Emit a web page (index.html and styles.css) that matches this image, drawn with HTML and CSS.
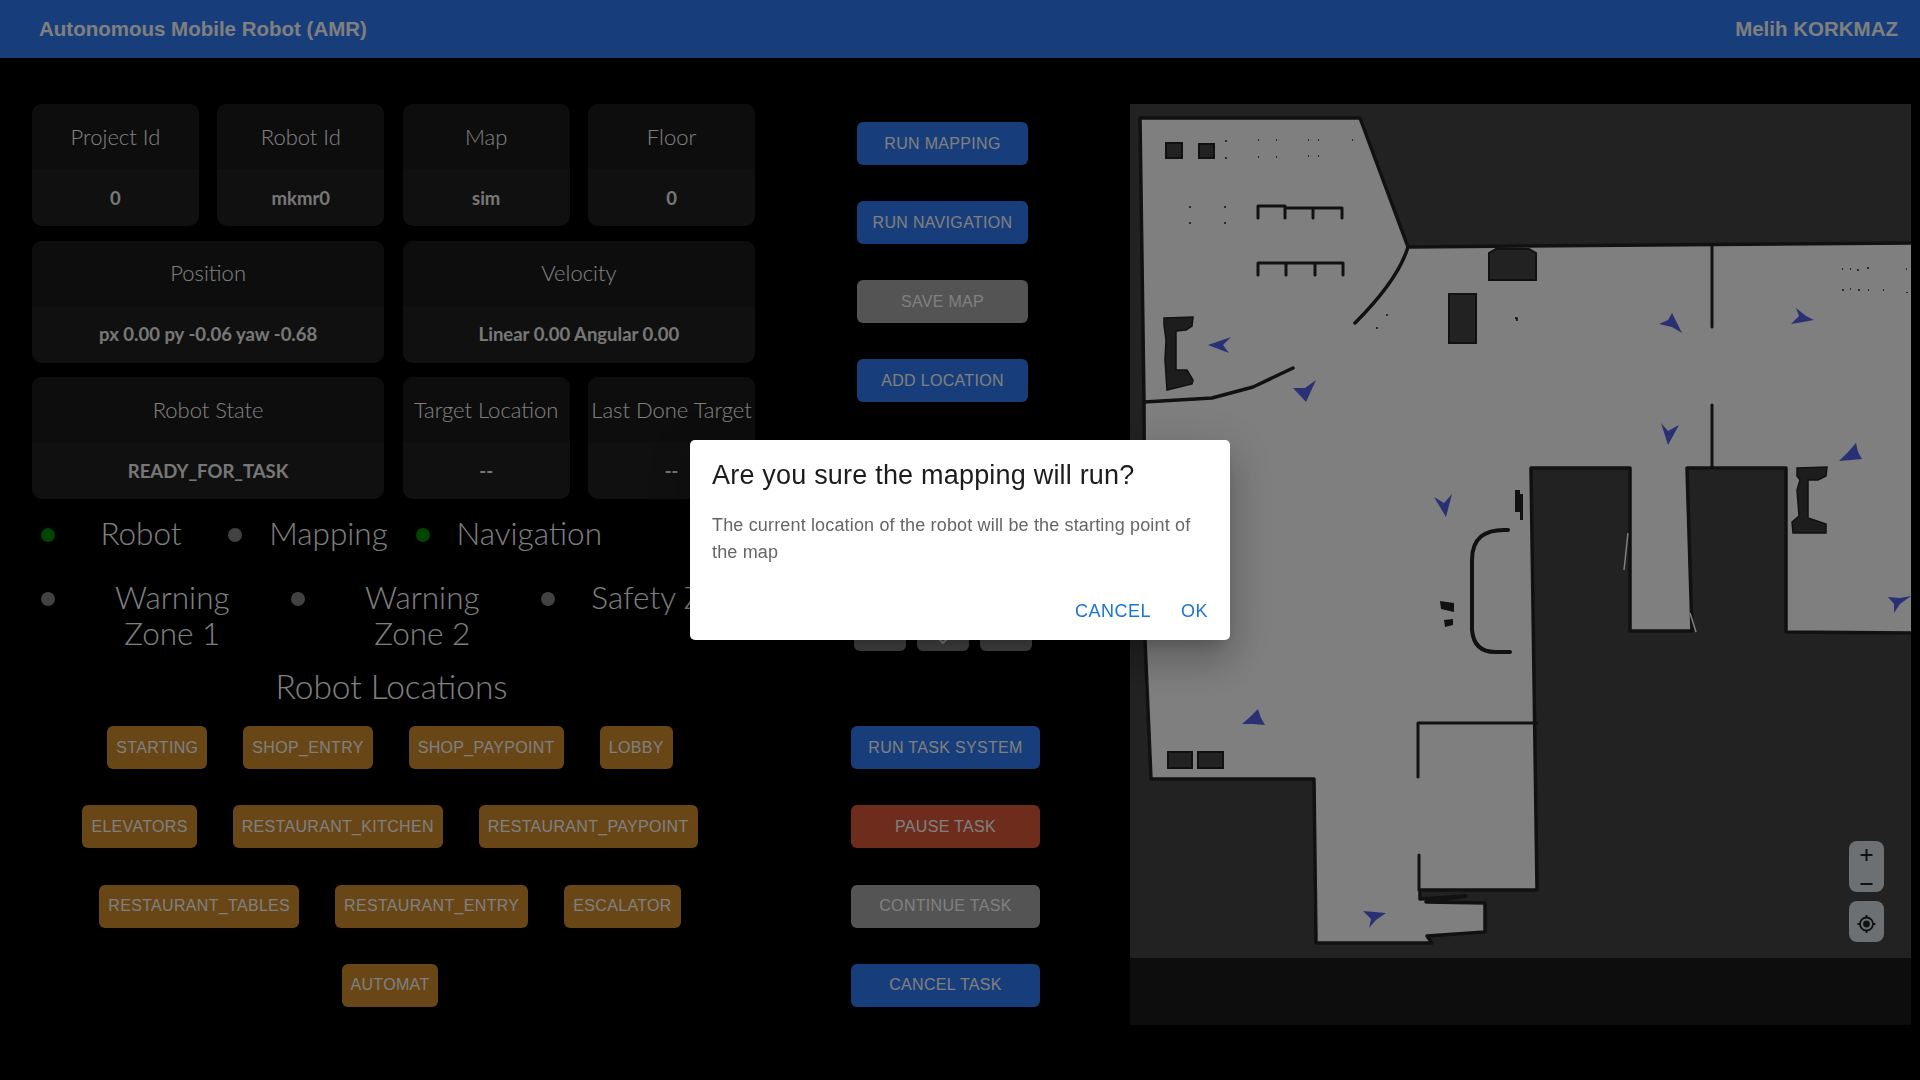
FILE: index.html
```html
<!DOCTYPE html>
<html>
    <head>
        <link rel="stylesheet" href="styles.css">
        <title>Autonomous Mobile Robot (AMR)</title>
        <meta charset="UTF-8">
        <meta name="viewport" content="width=device-width, initial-scale=1.0">
    </head>
    <body>
        <header class="top-bar">
            <span>Autonomous Mobile Robot (AMR)</span>
            <span>Melih KORKMAZ</span>
        </header>

        <div class="main-container">
            <section class="left-column">
                <div class="info-grid">
                    <div class="card"><div class="card-head">Project Id</div><div class="card-value">0</div></div>
                    <div class="card"><div class="card-head">Robot Id</div><div class="card-value">mkmr0</div></div>
                    <div class="card"><div class="card-head">Map</div><div class="card-value">sim</div></div>
                    <div class="card"><div class="card-head">Floor</div><div class="card-value">0</div></div>
                    <div class="card wide"><div class="card-head">Position</div><div class="card-value">px 0.00 py -0.06 yaw -0.68</div></div>
                    <div class="card wide"><div class="card-head">Velocity</div><div class="card-value">Linear 0.00 Angular 0.00</div></div>
                    <div class="card wide"><div class="card-head">Robot State</div><div class="card-value">READY_FOR_TASK</div></div>
                    <div class="card"><div class="card-head">Target Location</div><div class="card-value">--</div></div>
                    <div class="card"><div class="card-head">Last Done Target</div><div class="card-value">--</div></div>
                </div>

                <div class="status-row first">
                    <div class="status"><span class="dot on"></span><span class="status-text">Robot</span></div>
                    <div class="status"><span class="dot"></span><span class="status-text">Mapping</span></div>
                    <div class="status"><span class="dot on"></span><span class="status-text">Navigation</span></div>
                </div>
                <div class="status-row second">
                    <div class="status"><span class="dot"></span><span class="status-text">Warning<br>Zone 1</span></div>
                    <div class="status"><span class="dot"></span><span class="status-text">Warning<br>Zone 2</span></div>
                    <div class="status"><span class="dot"></span><span class="status-text">Safety Zone</span></div>
                </div>

                <h2 class="locations-title">Robot Locations</h2>
                <div class="chip-rows">
                    <div class="chip-row">
                        <button class="btn chip">STARTING</button>
                        <button class="btn chip">SHOP_ENTRY</button>
                        <button class="btn chip">SHOP_PAYPOINT</button>
                        <button class="btn chip">LOBBY</button>
                    </div>
                    <div class="chip-row">
                        <button class="btn chip">ELEVATORS</button>
                        <button class="btn chip">RESTAURANT_KITCHEN</button>
                        <button class="btn chip">RESTAURANT_PAYPOINT</button>
                    </div>
                    <div class="chip-row">
                        <button class="btn chip">RESTAURANT_TABLES</button>
                        <button class="btn chip">RESTAURANT_ENTRY</button>
                        <button class="btn chip">ESCALATOR</button>
                    </div>
                    <div class="chip-row">
                        <button class="btn chip">AUTOMAT</button>
                    </div>
                </div>
            </section>

            <section class="middle-column">
                <div class="btn-stack">
                    <button class="btn blue">RUN MAPPING</button>
                    <button class="btn blue">RUN NAVIGATION</button>
                    <button class="btn grey">SAVE MAP</button>
                    <button class="btn blue">ADD LOCATION</button>
                </div>
                <div class="pad">
                    <button class="pad-btn"></button>
                    <button class="pad-btn">
                        <svg width="16" height="10" viewBox="0 0 16 10"><path d="M2 2l6 6 6-6" fill="none" stroke="#fff" stroke-width="2"/></svg>
                    </button>
                    <button class="pad-btn"></button>
                </div>
                <div class="btn-stack task-stack">
                    <button class="btn blue">RUN TASK SYSTEM</button>
                    <button class="btn red">PAUSE TASK</button>
                    <button class="btn grey">CONTINUE TASK</button>
                    <button class="btn blue">CANCEL TASK</button>
                </div>
            </section>

            <section class="map-panel">
                <svg class="map" viewBox="1130 104 781 854">
                    <rect x="1130" y="104" width="781" height="854" fill="#444"/>
                    <g stroke="#222" stroke-width="3.5" stroke-linejoin="round" stroke-linecap="round" fill="none">
                        <polygon fill="#fff" points="1140,118 1360,118 1408,247 1915,243 1915,633 1786,632 1786,468 1687,468 1692,631 1630,631 1630,468 1531,468 1537,890 1420,890 1420,899 1466,896 1426,902 1485,903 1485,932 1427,936 1432,943 1316,943 1314,779 1151,779 1145,640 1144,402"/>
                        <!-- inner walls -->
                        <path d="M1144 402L1212 398 1253 387 1293 368"/>
                        <path d="M1408 247Q1398 280 1355 323"/>
                        <path stroke-width="3" d="M1712 245V327M1712 405V468"/>
                        <path stroke-width="4" d="M1508 530Q1472 528 1472 560V630Q1474 652 1495 652H1510"/>
                        <path stroke-width="3" d="M1537 723H1418V777M1419 855V890"/>
                        <!-- shelves -->
                        <path stroke-width="3" d="M1258 218V206H1285V218M1285 208H1313V218M1313 208H1342V218"/>
                        <path stroke-width="3" d="M1258 275V263H1286V275M1286 263H1315V275M1315 263H1343V275"/>
                    </g>
                    <g fill="#444" stroke="#222" stroke-width="2">
                        <rect x="1166" y="143" width="16" height="15"/>
                        <rect x="1199" y="144" width="15" height="14"/>
                        <path d="M1489 280V253L1496 249H1529L1536 253V280Z"/>
                        <rect x="1449" y="294" width="27" height="49"/>
                        <rect x="1168" y="752" width="24" height="16"/>
                        <rect x="1198" y="752" width="25" height="16"/>
                    </g>
                    <g fill="#3a3a3a" stroke="#222" stroke-width="1.5">
                        <polygon points="1164,318 1193,317 1192,326 1186,330 1176,331 1176,370 1187,370 1193,380 1192,384 1167,390 1165,360 1166,340 1164,325"/>
                        <polygon points="1797,468 1827,467 1826,476 1818,480 1808,480 1808,518 1826,524 1826,533 1793,533 1792,522 1799,516 1797,490 1800,480 1797,476"/>
                    </g>
                    <g fill="#222">
                        <path d="M1440 601L1454 603V612L1441 609Z"/>
                        <path d="M1444 620L1453 619V625L1445 627Z"/>
                        <rect x="1515" y="490" width="5" height="22"/>
                        <rect x="1520" y="494" width="3" height="26"/>
                    </g>
                    <!-- small scan dots -->
                    <path stroke="#222" stroke-width="1.5" d="M1226 140v2M1226 157v2M1258 140h1M1276 140h1M1308 140h1M1318 140h1M1352 140h1M1258 157h1M1276 157h1M1308 156h1M1318 156h1M1190 206v2M1190 222v2M1225 206v2M1225 222v2M1386 315h2M1376 328h2M1515 318h2v3M1842 269h1M1850 269h1M1858 269v2M1868 269v-2M1906 269h1M1842 290h2M1850 289h1M1858 290h2M1868 290h1M1883 290h1M1907 292v1"/>
                    <path stroke="#fff" stroke-width="1.5" d="M1628 533L1624 570M1690 613L1696 632"/>
                    <!-- location markers -->
                    <g fill="#5262e8">
                        <polygon points="1208,345 1231,337 1223,345 1229,353"/>
                        <polygon points="1293,388 1305,388 1316,380 1306,402"/>
                        <polygon points="1672,313 1682,333 1672,327 1659,324 1668,320"/>
                        <polygon points="1796,308 1806,316 1814,320 1803,322 1791,324 1799,316"/>
                        <polygon points="1661,423 1668,431 1679,425 1668,445"/>
                        <polygon points="1856,443 1858,452 1862,459 1851,460 1839,461 1849,451"/>
                        <polygon points="1434,497 1444,503 1452,494 1446,517"/>
                        <polygon points="1888,597 1900,598 1911,596 1900,604 1894,613 1894,604"/>
                        <polygon points="1258,709 1261,718 1265,725 1253,724 1242,724 1250,717"/>
                        <polygon points="1363,911 1386,913 1376,920 1369,928 1371,919"/>
                    </g>
                </svg>
                <div class="map-controls">
                    <div class="map-btn zoom-btn">
                        <svg width="35" height="51" viewBox="0 0 35 51">
                            <path d="M17.5 8v12M11.5 14h12M11.5 43h12" fill="none" stroke="#222" stroke-width="2"/>
                        </svg>
                    </div>
                    <div class="map-btn locate-btn">
                        <svg width="35" height="41" viewBox="0 0 35 41">
                            <circle cx="17.5" cy="23" r="6.5" fill="none" stroke="#222" stroke-width="1.8"/>
                            <circle cx="17.5" cy="23" r="3.4" fill="#222"/>
                            <path d="M17.5 14v3M17.5 29v3M8.5 23h3M23.5 23h3" fill="none" stroke="#222" stroke-width="1.8"/>
                        </svg>
                    </div>
                </div>
            </section>
        </div>

        <div class="overlay">
            <div class="dialog">
                <h2 class="dialog-title">Are you sure the mapping will run?</h2>
                <p class="dialog-text">The current location of the robot will be the starting point of the map</p>
                <div class="dialog-actions">
                    <button class="text-btn">CANCEL</button>
                    <button class="text-btn">OK</button>
                </div>
            </div>
        </div>
    </body>
</html>
```

FILE: styles.css
```css
* {
    box-sizing: border-box;
}
html, body {
    margin: 0;
    height: 100%;
    overflow: hidden;
    background-color: #000;
    color: #fff;
    font-family: "Liberation Sans", Arial, sans-serif;
}
.top-bar {
    height: 58px;
    background-color: #2e7af5;
    padding: 0 22px 0 39px;
    display: flex;
    align-items: center;
    justify-content: space-between;
    font-size: 20.5px;
    font-weight: bold;
}
.main-container {
    display: grid;
    grid-template-columns: 723px 375px 781px;
    margin-left: 32px;
    padding-top: 46px;
}

/* left side */
.info-grid {
    display: grid;
    grid-template-columns: repeat(4, 1fr);
    grid-auto-rows: 122px;
    gap: 14.5px 18.5px;
}
.card {
    border-radius: 10px;
    overflow: hidden;
    background-color: #202020;
    display: flex;
    flex-direction: column;
    text-align: center;
}
.card.wide {
    grid-column: span 2;
}
.card-head {
    height: 65px;
    padding-bottom: 1px;
    background-color: #1a1a1a;
    display: flex;
    align-items: center;
    justify-content: center;
    font-family: Lato, sans-serif;
    font-weight: 300;
    font-size: 22px;
    white-space: nowrap;
}
.card-value {
    flex: 1;
    display: flex;
    align-items: center;
    justify-content: center;
    font-family: Lato, sans-serif;
    font-weight: 700;
    font-size: 18.5px;
    color: #eee;
}
.status-row {
    display: grid;
    font-family: Lato, sans-serif;
    font-weight: 300;
    font-size: 31.5px;
    line-height: 36px;
    text-align: center;
}
.status-row.first {
    grid-template-columns: 187.5px 187.5px 214px;
    margin-top: 16px;
}
.status-row.second {
    grid-template-columns: 250px 250px 250px;
    margin-top: 28px;
}
.status {
    display: flex;
    align-items: flex-start;
    padding-left: 8.5px;
}
.status-text {
    flex: 1;
    padding-left: 8px;
    white-space: nowrap;
}
.dot {
    width: 14px;
    height: 14px;
    margin-top: 13px;
    border-radius: 50%;
    background-color: #848484;
    flex-shrink: 0;
}
.dot.on {
    background-color: #008c00;
}
.locations-title {
    margin: 17px 0 22px;
    padding-right: 4px;
    text-align: center;
    font-family: Lato, sans-serif;
    font-weight: 300;
    font-size: 33.5px;
    line-height: 36px;
}
.chip-rows {
    display: flex;
    flex-direction: column;
    gap: 36.33px;
}
.chip-row {
    display: flex;
    justify-content: center;
    gap: 36px;
    padding-right: 7px;
}

/* buttons */
.btn {
    height: 43px;
    border: 0;
    border-radius: 6px;
    padding: 0 9px;
    color: #fff;
    font-family: "Liberation Sans", Arial, sans-serif;
    font-size: 16px;
    letter-spacing: 0.32px;
    white-space: nowrap;
}
.chip {
    background-color: #d28c2c;
}
.blue {
    background-color: #2e7af5;
}
.red {
    background-color: #dc5a38;
}
.grey {
    background-color: #a8a8a8;
}

/* middle */
.middle-column {
    display: flex;
    flex-direction: column;
    align-items: center;
    padding-top: 18px;
}
.btn-stack {
    width: 171px;
    display: flex;
    flex-direction: column;
    gap: 36px;
}
.task-stack {
    width: 189px;
    margin: 75px 0 0 6px;
    gap: 36.33px;
}
.pad {
    margin-top: 206px;
    display: grid;
    grid-template-columns: repeat(3, 52px);
    gap: 11px;
}
.pad-btn {
    height: 43px;
    border: 0;
    border-radius: 6px;
    background-color: #8c8c8c;
    padding: 0 0 6px;
    display: flex;
    align-items: flex-end;
    justify-content: center;
}

/* map */
.map-panel {
    position: relative;
    height: 921px;
    background-color: #1a1a1a;
}
.map {
    display: block;
    width: 781px;
    height: 854px;
}
.map-controls {
    position: absolute;
    left: 719px;
    top: 737px;
    display: flex;
    flex-direction: column;
    gap: 9px;
}
.map-btn {
    width: 35px;
    border-radius: 8px;
    background-color: #d8e0e4;
}
.map-btn svg {
    display: block;
}
.zoom-btn {
    height: 51px;
}
.locate-btn {
    height: 41px;
}

/* dialog */
.overlay {
    position: fixed;
    top: 0;
    left: 0;
    right: 0;
    bottom: 0;
    background-color: rgba(0, 0, 0, 0.5);
    display: flex;
    align-items: center;
    justify-content: center;
}
.dialog {
    width: 540px;
    height: 200px;
    border-radius: 5px;
    background-color: #fff;
    padding: 17px 22px 16px;
    color: #1c1c1c;
    display: flex;
    flex-direction: column;
    box-shadow: 0 11px 15px -7px rgba(0, 0, 0, 0.2), 0 24px 38px 3px rgba(0, 0, 0, 0.14), 0 9px 46px 8px rgba(0, 0, 0, 0.12);
}
.dialog-title {
    margin: 0;
    font-size: 27px;
    font-weight: normal;
    line-height: 36px;
    letter-spacing: 0.2px;
}
.dialog-text {
    margin: 19px 0 0;
    color: #666;
    font-size: 18px;
    line-height: 27px;
    letter-spacing: 0.16px;
}
.dialog-actions {
    margin-top: auto;
    display: flex;
    justify-content: flex-end;
    gap: 30px;
    padding-bottom: 2px;
}
.text-btn {
    border: 0;
    padding: 0;
    background: none;
    color: #1976d2;
    font-family: "Liberation Sans", Arial, sans-serif;
    font-size: 18px;
    letter-spacing: 0.5px;
}
```
